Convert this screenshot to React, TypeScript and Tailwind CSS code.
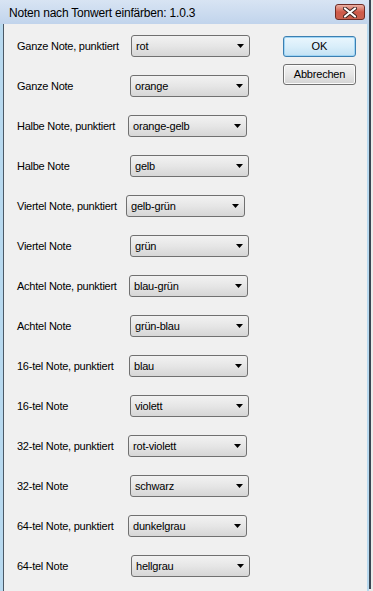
import React from "react";

const rows: { label: string; value: string; ml: string }[] = [
  { label: "Ganze Note, punktiert", value: "rot", ml: "ml-[114px]" },
  { label: "Ganze Note", value: "orange", ml: "ml-[113px]" },
  { label: "Halbe Note, punktiert", value: "orange-gelb", ml: "ml-[111px]" },
  { label: "Halbe Note", value: "gelb", ml: "ml-[113px]" },
  { label: "Viertel Note, punktiert", value: "gelb-grün", ml: "ml-[109px]" },
  { label: "Viertel Note", value: "grün", ml: "ml-[113px]" },
  { label: "Achtel Note, punktiert", value: "blau-grün", ml: "ml-[112px]" },
  { label: "Achtel Note", value: "grün-blau", ml: "ml-[113px]" },
  { label: "16-tel Note, punktiert", value: "blau", ml: "ml-[112px]" },
  { label: "16-tel Note", value: "violett", ml: "ml-[113px]" },
  { label: "32-tel Note, punktiert", value: "rot-violett", ml: "ml-[111px]" },
  { label: "32-tel Note", value: "schwarz", ml: "ml-[113px]" },
  { label: "64-tel Note, punktiert", value: "dunkelgrau", ml: "ml-[111px]" },
  { label: "64-tel Note", value: "hellgrau", ml: "ml-[114px]" },
];

const font = { fontFamily: '"Liberation Sans", Arial, sans-serif' };

function Combo({ value, ml }: { value: string; ml: string }) {
  return (
    <div
      className={`${ml} relative flex h-[22px] w-[119px] shrink-0 items-center rounded-[3px] border border-[#707070] bg-gradient-to-b from-[#f2f2f2] via-[#e6e6e6] to-[#d6d6d6] pl-[4px] pt-[1px] text-[11px] tracking-[-0.2px] text-black`}
    >
      <span>{value}</span>
      <svg
        className="absolute right-[4px] top-[8px]"
        width="8"
        height="5"
        viewBox="0 0 8 5"
      >
        <path d="M0 0 H7 L3.5 4 Z" fill="#000" />
      </svg>
    </div>
  );
}

export default function App() {
  return (
    <div className="h-[591px] w-[373px] overflow-hidden bg-[#ebebeb]" style={font}>
      <div className="flex h-[589px] w-[371px] flex-col border-b-[2px] border-r-[2px] border-[#3a4652]">
        {/* title bar */}
        <div className="flex h-[24px] shrink-0 items-center bg-gradient-to-b from-[#d8e4f3] to-[#c1d4ec] pl-[9px] pr-[4px]">
          <span className="flex-1 pt-[1px] text-[12px] tracking-[-0.2px] text-black">
            Noten nach Tonwert einfärben: 1.0.3
          </span>
          <div className="flex h-[16px] w-[30px] items-center justify-center rounded-[3px] border border-[#6e2b24] bg-gradient-to-b from-[#eab0a4] via-[#cf5a4a] to-[#c9614f]">
            <svg width="14" height="11" viewBox="0 0 14 11">
              <path
                d="M2 1.5 L12 9.5 M12 1.5 L2 9.5"
                stroke="#3b2320"
                strokeWidth="4"
                strokeLinecap="round"
              />
              <path
                d="M2 1.5 L12 9.5 M12 1.5 L2 9.5"
                stroke="#ffffff"
                strokeWidth="2.2"
                strokeLinecap="round"
              />
            </svg>
          </div>
        </div>
        {/* body */}
        <div className="flex flex-1 bg-[#b8d9ef] pb-[2px] pl-[3px] pr-[2px]">
          <div className="flex flex-1 bg-[#f0f0f0] border-l border-[#4b5966]">
            <div className="flex w-[266px] flex-col pl-[13px] pt-[11px]">
              {rows.map((r) => (
                <div key={r.label} className="mb-[18px] flex h-[22px] items-center">
                  <span className="w-[0px] whitespace-nowrap pt-[1px] text-[11px] tracking-[-0.25px] text-black">
                    {r.label}
                  </span>
                  <Combo value={r.value} ml={r.ml} />
                </div>
              ))}
            </div>
            <div className="flex flex-col gap-[7px] pl-[13px] pt-[12px]">
              <button className="flex h-[21px] w-[73px] items-center justify-center rounded-[3px] border border-[#3c7fb1] bg-gradient-to-b from-[#eaf6fd] via-[#d9eefa] to-[#c3e2f4] text-[11px] text-black shadow-[inset_0_0_0_1px_#9fd5f5]">
                OK
              </button>
              <button className="flex h-[21px] w-[73px] items-center justify-center rounded-[3px] border border-[#707070] bg-gradient-to-b from-[#f2f2f2] via-[#e6e6e6] to-[#d4d4d4] text-[11px] tracking-[-0.2px] text-black shadow-[inset_0_0_0_1px_#fbfbfb]">
                Abbrechen
              </button>
            </div>
          </div>
        </div>
      </div>
    </div>
  );
}
